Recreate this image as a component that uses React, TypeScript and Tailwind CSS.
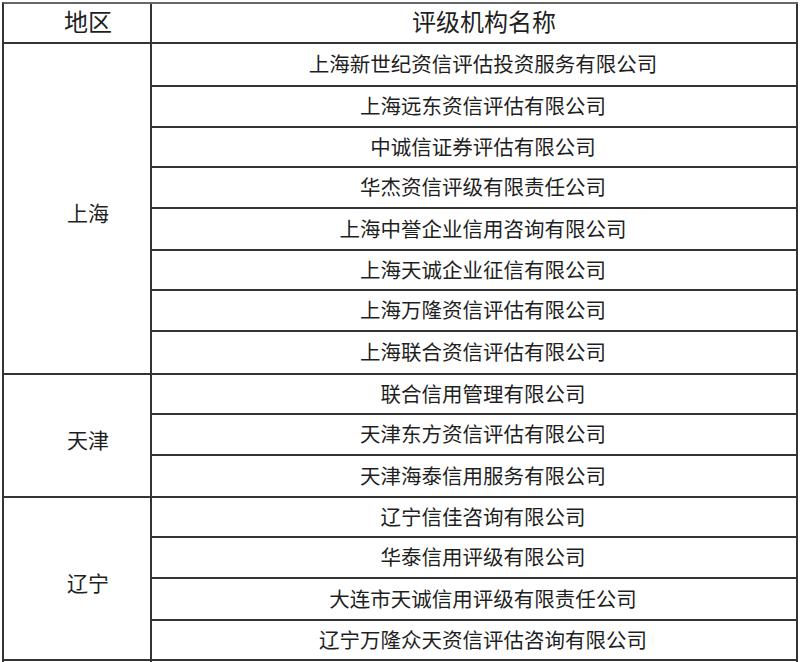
const FONT = "font-['Liberation_Sans','Noto_Sans_CJK_SC',sans-serif]";

type Group = {
  region: string;
  rows: { name: string; h: string }[];
};

const GROUPS: Group[] = [
  {
    region: '上海',
    rows: [
      { name: '上海新世纪资信评估投资服务有限公司', h: 'h-[43px]' },
      { name: '上海远东资信评估有限公司', h: 'h-[41px]' },
      { name: '中诚信证券评估有限公司', h: 'h-[40px]' },
      { name: '华杰资信评级有限责任公司', h: 'h-[41px]' },
      { name: '上海中誉企业信用咨询有限公司', h: 'h-[42px]' },
      { name: '上海天诚企业征信有限公司', h: 'h-[40px]' },
      { name: '上海万隆资信评估有限公司', h: 'h-[41px]' },
      { name: '上海联合资信评估有限公司', h: 'h-[43px]' },
    ],
  },
  {
    region: '天津',
    rows: [
      { name: '联合信用管理有限公司', h: 'h-[40px]' },
      { name: '天津东方资信评估有限公司', h: 'h-[41px]' },
      { name: '天津海泰信用服务有限公司', h: 'h-[42px]' },
    ],
  },
  {
    region: '辽宁',
    rows: [
      { name: '辽宁信佳咨询有限公司', h: 'h-[40px]' },
      { name: '华泰信用评级有限公司', h: 'h-[41px]' },
      { name: '大连市天诚信用评级有限责任公司', h: 'h-[42px]' },
      { name: '辽宁万隆众天资信评估咨询有限公司', h: 'h-[40px]' },
    ],
  },
];

export default function App() {
  return (
    <div className={`w-[800px] h-[662px] overflow-hidden bg-white pl-[2px] pt-[2px] text-[#1f1f1f] ${FONT}`}>
      <div className="w-[796px] border-t-2 border-l-2 border-t-[#666] border-l-[#333]">
        {/* header */}
        <div className="flex h-[40px]">
          <div className="w-[148px] flex items-center justify-center pl-[22px] border-r-2 border-b-2 border-[#333] text-[24px] leading-none">
            地区
          </div>
          <div className="w-[646px] flex items-center justify-center pl-[20px] border-r-2 border-b-2 border-[#333] text-[24px] leading-none">
            评级机构名称
          </div>
        </div>

        {GROUPS.map((g) => (
          <div key={g.region} className="flex">
            <div className="w-[148px] flex items-center justify-center pl-[22px] pt-[10px] border-r-2 border-b-2 border-[#333] text-[21px] leading-none">
              {g.region}
            </div>
            <div className="w-[646px] flex flex-col">
              {g.rows.map((r) => (
                <div
                  key={r.name}
                  className={`${r.h} flex items-center justify-center pl-[18px] pt-[2px] border-r-2 border-b-2 border-[#333] text-[20.5px] leading-none`}
                >
                  {r.name}
                </div>
              ))}
            </div>
          </div>
        ))}

        {/* next section, cut off by the window */}
        <div className="flex h-[40px]">
          <div className="w-[148px] border-r-2 border-[#333]" />
          <div className="w-[646px] border-r-2 border-[#333]" />
        </div>
      </div>
    </div>
  );
}
